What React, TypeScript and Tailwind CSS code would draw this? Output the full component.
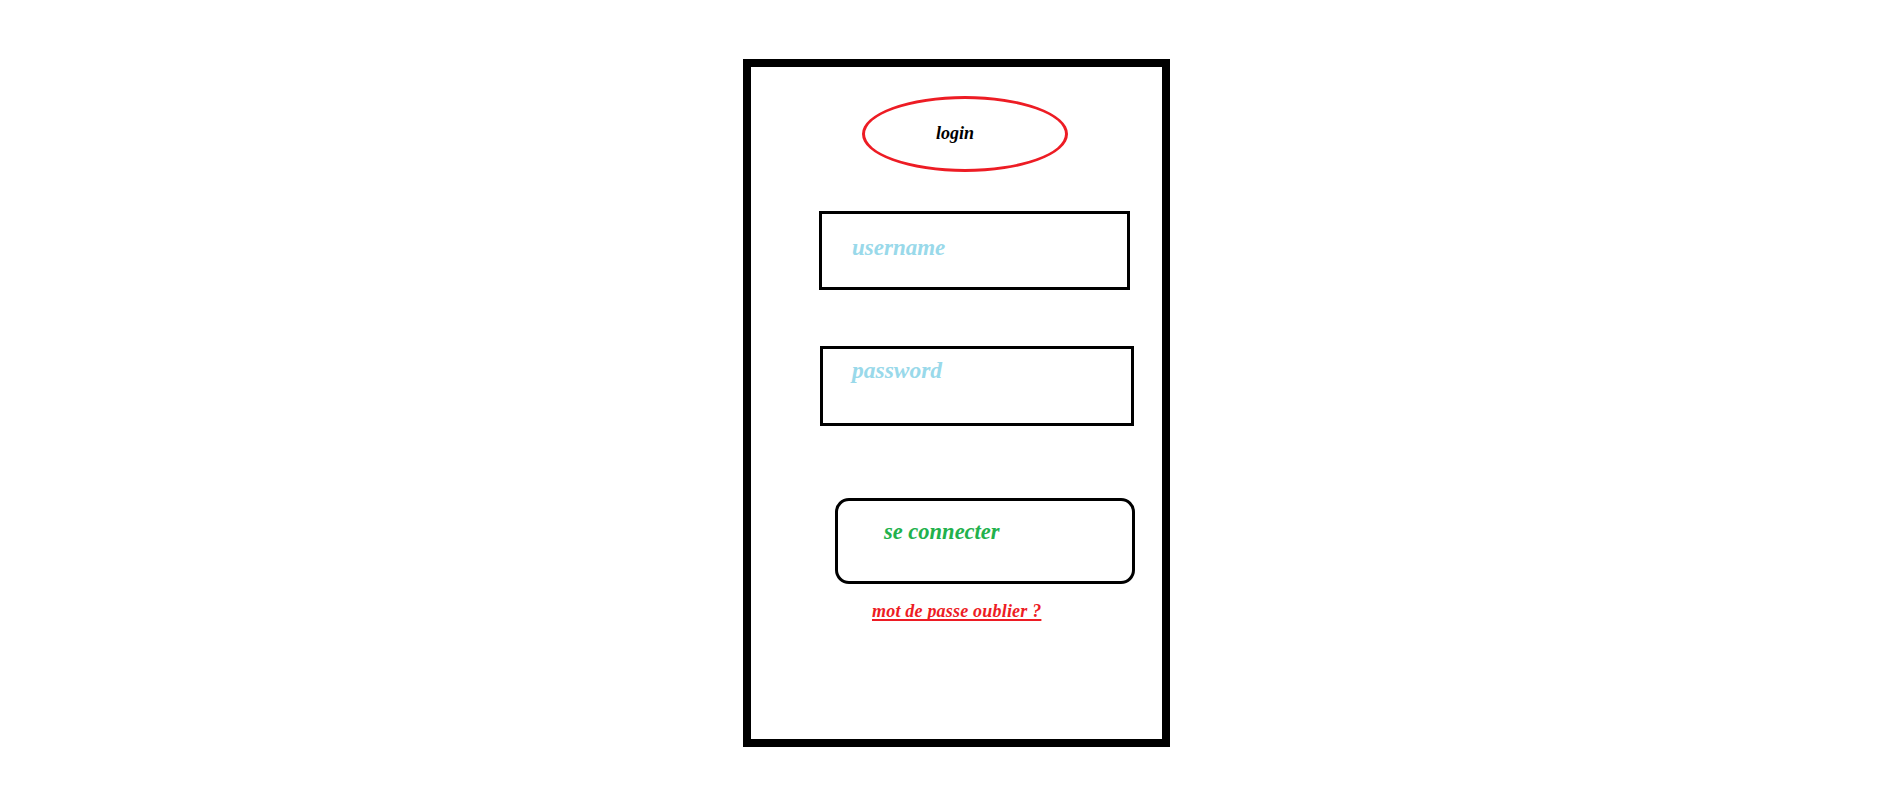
export default function App() {
  const serif = "font-['Liberation_Serif','Times_New_Roman',serif] font-bold italic leading-none";
  return (
    <div className="w-[1885px] h-[789px] bg-white overflow-hidden">
      <div className="ml-[743px] mt-[59px] w-[427px] h-[688px] border-[8px] border-black flex flex-col items-start">
        <div className={`ml-[111px] mt-[29px] w-[206px] h-[76px] rounded-[50%] border-[3px] border-[#ed1c24] pl-[71px] pt-[25px] text-[18px] text-black ${serif}`}>
          login
        </div>
        <div className={`ml-[68px] mt-[39px] w-[311px] h-[79px] border-[3px] border-black pl-[30px] pt-[22px] text-[23px] text-[#99d9ea] ${serif}`}>
          username
        </div>
        <div className={`ml-[69px] mt-[56px] w-[314px] h-[80px] border-[3px] border-black pl-[29px] pt-[10px] text-[23.5px] text-[#99d9ea] ${serif}`}>
          password
        </div>
        <div className={`ml-[84px] mt-[72px] w-[300px] h-[86px] rounded-[14px] border-[3px] border-black pl-[46px] pt-[20px] text-[22.5px] text-[#22b14c] ${serif}`}>
          se connecter
        </div>
        <div className={`ml-[121px] mt-[18px] text-[18px] tracking-[0.2px] text-[#ed1c24] underline decoration-2 underline-offset-[2px] [text-decoration-skip-ink:none] ${serif}`}>
          mot de passe oublier ?
        </div>
      </div>
    </div>
  );
}
